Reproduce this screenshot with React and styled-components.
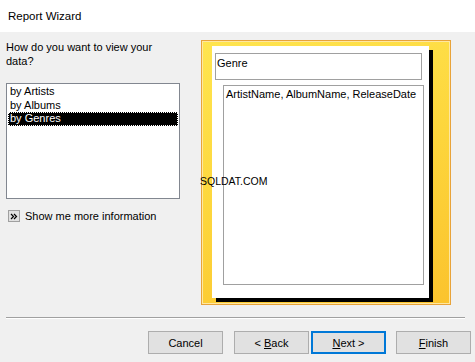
import React from "react";
import styled, { createGlobalStyle } from "styled-components";

const GlobalStyle = createGlobalStyle`
  html, body {
    margin: 0;
    padding: 0;
    background: #f0f0f0;
  }
  body {
    font-family: "Liberation Sans", Arial, sans-serif;
    font-size: 11px;
    color: #000;
  }
`;

const Window = styled.div`
  width: 475px;
  height: 362px;
  background: #f0f0f0;
  overflow: hidden;
`;

const TitleBar = styled.div`
  height: 31px;
  padding-bottom: 1px;
  background: #fff;
  display: flex;
  align-items: center;
  padding-left: 8px;
  font-size: 11.5px;
`;

const Main = styled.div`
  display: flex;
  padding: 8px 0 0 6px;
`;

const LeftColumn = styled.div`
  width: 174px;
  display: flex;
  flex-direction: column;
`;

const Question = styled.div`
  line-height: 14px;
  padding-right: 10px;
`;

const ListBox = styled.div`
  margin-top: 15px;
  height: 113px;
  background: #fff;
  border: 1px solid #828790;
  padding: 1px 0 0 0;
  box-sizing: content-box;
`;

const ListItem = styled.div`
  height: 13.5px;
  line-height: 13.5px;
  padding-left: 2px;
  margin: 0 1px;
  background: ${(p) => (p.$selected ? "#000" : "transparent")};
  color: ${(p) => (p.$selected ? "#fff" : "#000")};
  outline: ${(p) => (p.$selected ? "1px dotted #fff" : "none")};
  outline-offset: -1px;
`;

const MoreInfo = styled.div`
  margin-top: 10px;
  display: flex;
  align-items: center;
  gap: 5px;
  padding-left: 2px;
  line-height: 14px;
`;

const MoreIcon = styled.span`
  width: 10px;
  height: 10px;
  border: 1px solid #a0a0a0;
  background: #e1e1e1;
  display: flex;
  align-items: center;
  justify-content: center;
`;

const Preview = styled.div`
  position: relative;
  margin-left: 21px;
  width: 238px;
  height: 258px;
  border: 1px solid #e8a33a;
  box-shadow: inset 0 0 0 1px #ffe7a0;
  background: linear-gradient(160deg, #ffe54f 0%, #fdd63c 50%, #fbc32d 100%);
  padding: 5px 0 0 10px;
  box-sizing: content-box;
`;

const Page = styled.div`
  width: 217px;
  height: 252px;
  background: #fff;
  box-shadow: 4px 4px 0 0 #000;
  display: flex;
  flex-direction: column;
  padding: 7px 0 0 3px;
  box-sizing: border-box;
`;

const Field = styled.div`
  box-sizing: border-box;
  border: 1px solid #a0a0a0;
  width: ${(p) => p.$w}px;
  height: ${(p) => p.$h}px;
  margin-left: ${(p) => p.$indent || 0}px;
  margin-top: ${(p) => p.$top || 0}px;
  padding: ${(p) => p.$padTop ?? 2}px 0 0 ${(p) => p.$pad || 1}px;
  line-height: 14px;
  white-space: nowrap;
`;

const Watermark = styled.div`
  position: absolute;
  left: -2px;
  top: 134px;
  font-size: 10.5px;
  color: #000;
`;

const Separator = styled.div`
  margin: 12px 10px 0 6px;
  height: 1px;
  border-top: 1px solid #a0a0a0;
  background: #fff;
`;

const ButtonRow = styled.div`
  display: flex;
  padding: 12px 0 0 148px;
`;

const Button = styled.div`
  width: 75px;
  height: 23px;
  box-sizing: border-box;
  border: ${(p) => (p.$default ? "2px solid #0078d7" : "1px solid #adadad")};
  background: #e1e1e1;
  display: flex;
  align-items: center;
  justify-content: center;
  margin-left: ${(p) => p.$gap || 0}px;
  white-space: pre;
`;

const Key = styled.span`
  text-decoration: underline;
`;

export default function App() {
  return (
    <Window>
      <GlobalStyle />
      <TitleBar>Report Wizard</TitleBar>
      <Main>
        <LeftColumn>
          <Question>How do you want to view your data?</Question>
          <ListBox>
            <ListItem>by Artists</ListItem>
            <ListItem>by Albums</ListItem>
            <ListItem $selected>by Genres</ListItem>
          </ListBox>
          <MoreInfo>
            <MoreIcon>
              <svg width="8" height="7" viewBox="0 0 8 7">
                <path d="M1 1l2.5 2.5L1 6M4 1l2.5 2.5L4 6" fill="none" stroke="#000" strokeWidth="1.2" />
              </svg>
            </MoreIcon>
            <span>Show me more information</span>
          </MoreInfo>
        </LeftColumn>
        <Preview>
          <Page>
            <Field $w={207} $h={27}>Genre</Field>
            <Field $w={201} $h={200} $indent={8} $top={5} $pad={2} $padTop={1}>
              ArtistName, AlbumName, ReleaseDate
            </Field>
          </Page>
          <Watermark>SQLDAT.COM</Watermark>
        </Preview>
      </Main>
      <Separator />
      <ButtonRow>
        <Button><span>Cancel</span></Button>
        <Button $gap={11}><span>&lt; <Key>B</Key>ack</span></Button>
        <Button $gap={2} $default><span><Key>N</Key>ext &gt;</span></Button>
        <Button $gap={10}><span><Key>F</Key>inish</span></Button>
      </ButtonRow>
    </Window>
  );
}
